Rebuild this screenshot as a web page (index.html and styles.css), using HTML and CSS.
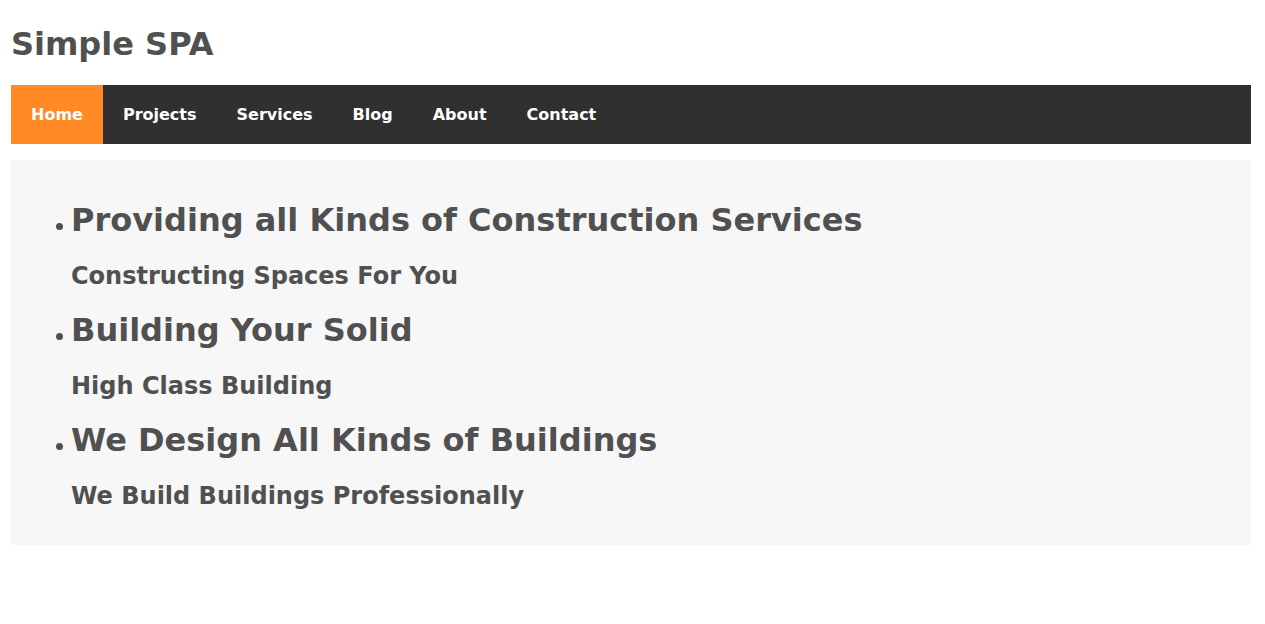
FILE: index.html
```html
<!DOCTYPE html>
<html lang="en">
<head>
<meta charset="utf-8">
<title>Simple SPA</title>
<link rel="stylesheet" href="styles.css">
</head>
<body>
<div class="page">
  <h1 class="site-title">Simple SPA</h1>
  <ul class="nav">
    <li><a class="active" href="#">Home</a></li>
    <li><a href="#">Projects</a></li>
    <li><a href="#">Services</a></li>
    <li><a href="#">Blog</a></li>
    <li><a href="#">About</a></li>
    <li><a href="#">Contact</a></li>
  </ul>
  <div class="content">
    <ul class="slides">
      <li>
        <h1>Providing all Kinds of Construction Services</h1>
        <h2>Constructing Spaces For You</h2>
      </li>
      <li>
        <h1>Building Your Solid</h1>
        <h2>High Class Building</h2>
      </li>
      <li>
        <h1>We Design All Kinds of Buildings</h1>
        <h2>We Build Buildings Professionally</h2>
      </li>
    </ul>
  </div>
</div>
</body>
</html>
```
FILE: styles.css
```css
html, body {
  margin: 0;
  padding: 0;
  background: #ffffff;
}
body {
  font-family: "DejaVu Sans", sans-serif;
  color: #505050;
}
.page {
  padding: 0 14px 0 11px;
}
.site-title {
  font-size: 32px;
  font-weight: bold;
  margin: 0;
  padding: 26px 0 0;
  line-height: 1.164;
  height: 59px;
}
.nav {
  list-style: none;
  margin: 0;
  padding: 0;
  display: flex;
  background: #303030;
}
.nav a {
  display: block;
  padding: 20px;
  color: #ffffff;
  font-weight: bold;
  font-size: 16px;
  text-decoration: none;
}
.nav a.active {
  background: #ff8a26;
}
.content {
  margin-top: 16px;
  background: #f7f7f7;
  padding: 20px;
}
.slides {
  margin: 0;
  padding-left: 40px;
  list-style: none;
}
.slides h1 {
  position: relative;
  font-size: 32px;
  margin: 21px 0 23px;
}
.slides h1::before {
  content: "";
  position: absolute;
  left: -15px;
  top: 22px;
  width: 7px;
  height: 7px;
  border-radius: 50%;
  background: #505050;
}
.slides h2 {
  font-size: 24px;
  margin: 20px 0;
}
.slides li:last-child h2 {
  margin-bottom: 15px;
}
```
